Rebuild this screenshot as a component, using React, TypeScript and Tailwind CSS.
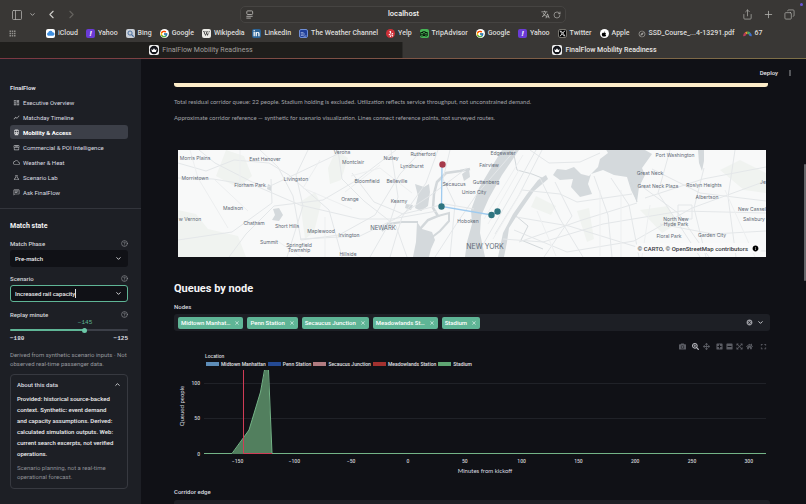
import React, { useState } from "react";
import { ChevronDown, ChevronLeft, ChevronRight, ChevronUp, CircleHelp, Copy, PanelLeft, Plus, RotateCw, Share } from "lucide-react";
import { FaArrowsAlt, FaCamera, FaExpandArrowsAlt, FaHome, FaMinusSquare, FaPlusSquare, FaSearchPlus, FaApple, FaLinkedinIn, FaWikipediaW, FaYelp, FaTripadvisor } from "react-icons/fa";
import { FaXTwitter } from "react-icons/fa6";
import { FcGoogle } from "react-icons/fc";
import { MdCloudQueue, MdDirectionsSubway, MdFullscreen, MdMoreVert, MdOutlineChat, MdOutlineDashboard, MdOutlineScience, MdOutlineStorefront, MdShowChart, MdTranslate, MdCancel, MdApps, MdOutlineExplore, MdInfo, MdClose } from "react-icons/md";

const box = "flex size-[9px] shrink-0 items-center justify-center overflow-hidden rounded-[2px]";

const Yahoo = () => <span className={`${box} bg-[#6a3bd6] text-[8px] font-bold italic text-white`}>!</span>;
const Google = () => (
  <span className="flex size-[9px] shrink-0 items-center justify-center rounded-full bg-white"><FcGoogle size={8} /></span>
);

const bookmarks: { name: string; icon: React.ReactNode }[] = [
  {
    name: "iCloud",
    icon: (
      <span className={`${box} bg-white`}>
        <svg viewBox="0 0 10 10" className="size-[9px]"><path d="M2.6 7.5a1.8 1.8 0 0 1-.1-3.5 2.6 2.6 0 0 1 4.900-.5A2 2 0 0 1 7.500 7.500z" fill="#3f8fe0" /></svg>
      </span>
    ),
  },
  { name: "Yahoo", icon: <Yahoo /> },
  {
    name: "Bing",
    icon: (
      <span className={`${box} bg-[#c9ced6]`}>
        <svg viewBox="0 0 10 10" className="size-[9px]" fill="none" stroke="#42699c"><circle cx="4.500" cy="4.500" r="2.300" /><path d="M6.200 6.200 8.500 8.500" strokeWidth="1.300" /></svg>
      </span>
    ),
  },
  { name: "Google", icon: <Google /> },
  { name: "Wikipedia", icon: <span className={`${box} bg-[#ecebe6] text-black`}><FaWikipediaW size={7} /></span> },
  { name: "LinkedIn", icon: <span className={`${box} bg-[#2d6496] text-white`}><FaLinkedinIn size={7} /></span> },
  {
    name: "The Weather Channel",
    icon: (
      <span className={`${box} border border-[#6f8ed6] bg-[#203f9a]`}>
        <svg viewBox="0 0 10 10" className="size-[8px]" fill="none" stroke="#c9d6f4" strokeWidth=".9"><path d="M1 3h4M1 5h6M1 7.500q2-1.500 4 0t4 0" /></svg>
      </span>
    ),
  },
  { name: "Yelp", icon: <span className="flex size-[9px] shrink-0 items-center justify-center rounded-full bg-[#cf3038] text-white"><FaYelp size={6} /></span> },
  { name: "TripAdvisor", icon: <span className={`${box} bg-[#46b455] text-black`}><FaTripadvisor size={8} /></span> },
  { name: "Google", icon: <Google /> },
  { name: "Yahoo", icon: <Yahoo /> },
  { name: "Twitter", icon: <span className={`${box} border border-[#77756f] bg-black text-white`}><FaXTwitter size={7} /></span> },
  { name: "Apple", icon: <span className="flex size-[9px] shrink-0 items-center justify-center rounded-full bg-white text-black"><FaApple size={6} /></span> },
  { name: "SSD_Course_...4-13291.pdf", icon: <MdOutlineExplore size={8} className="text-[#a9a8a5]" /> },
  {
    name: "67",
    icon: (
      <svg viewBox="0 0 10 10" className="size-[9px]" fill="none" strokeWidth="2.600">
        <path d="M1.500 8A3.500 3.500 0 0 1 3 4.800" stroke="#b93b5a" />
        <path d="M3 4.800A3.500 3.500 0 0 1 5 4.200" stroke="#e79a2e" />
        <path d="M5 4.200A3.500 3.500 0 0 1 7.400 5.200" stroke="#49a863" />
        <path d="M7.400 5.200A3.500 3.500 0 0 1 8.500 8" stroke="#3d6fd0" />
      </svg>
    ),
  },
];

const Favicon = () => (
  <svg viewBox="0 0 10 10" className="size-[10px] shrink-0">
    <rect width="10" height="10" rx="2" fill="#f2f2f2" />
    <circle cx="5" cy="5" r="4.200" fill="#14161c" />
    <path d="M2.200 4.200 3.800 5 5 3.300 6.200 5l1.600-.8L6.800 7H3.200z" fill="#fff" />
  </svg>
);

function Browser() {
  return (
    <div className="shrink-0 bg-[#393735] text-[#dedddb]">
      <div className="relative flex h-[27px] items-center px-[11px] pt-[2px] text-[#b5b4b1]">
        <div className="flex flex-1 items-center">
          <button aria-label="Sidebar"><PanelLeft size={12} strokeWidth={1.5} /></button>
          <button aria-label="Sidebar options" className="ml-[6px]"><ChevronDown size={7} strokeWidth={3} /></button>
          <button aria-label="Back" className="ml-[9px] text-[#cfcecb]"><ChevronLeft size={13} strokeWidth={2} /></button>
          <button aria-label="Forward" className="ml-[7px] text-[#64625f]"><ChevronRight size={13} strokeWidth={2} /></button>
        </div>
        <div className="flex h-[17px] w-[326px] max-w-1/2 items-center justify-between rounded-[5px] border border-[#464442] bg-[#363432] px-[4px]">
          <svg viewBox="0 0 10 10" className="size-[9px]" fill="none" stroke="currentColor"><rect x="2" y="1" width="6.500" height="4" rx="1" /><path d="M1.500 7h7M1.500 9h5" /></svg>
          <span className="pl-[12px] font-['Inter',sans-serif] text-[7px] font-semibold text-[#f1f0ee]">localhost</span>
          <span className="flex items-center gap-[3px]"><MdTranslate size={9} /><button aria-label="Reload"><RotateCw size={8} strokeWidth={2} /></button></span>
        </div>
        <div className="flex flex-1 items-center justify-end gap-[10px]">
          <button aria-label="Share"><Share size={11} strokeWidth={1.5} /></button>
          <button aria-label="New tab"><Plus size={11} strokeWidth={1.700} /></button>
          <button aria-label="Tab overview"><Copy size={11} strokeWidth={1.500} className="-scale-x-100" /></button>
        </div>
        <span className="absolute right-[3px] top-[3px] size-[3px] rounded-full bg-[#6a55d8]" />
      </div>
      <nav aria-label="Bookmarks" className="flex h-[15px] items-center whitespace-nowrap pb-[2px] pl-[8px] text-[7px] font-medium">
        <MdApps size={9} className="mr-[29px] shrink-0 text-[#918f8c]" />
        <div className="flex items-center gap-[8px]">
          {bookmarks.map((b, i) => (
            <a key={i} href="#" className="flex items-center gap-[3px]">{b.icon}{b.name}</a>
          ))}
        </div>
      </nav>
      <div className="grid h-[16px] grid-cols-2 text-[7px]">
        <button className="flex items-center justify-center gap-[3px] border-r border-r-[#2c2b29] bg-[#1f1e1c] text-[#a09f9c]"><Favicon />FinalFlow Mobility Readiness</button>
        <button className="flex items-center justify-center gap-[3px] font-medium text-[#e9e8e6]"><Favicon />FinalFlow Mobility Readiness</button>
      </div>
      <div className="h-px bg-linear-to-r from-[#7b3742] to-[#7d7048]" />
    </div>
  );
}

const pages = [
  { name: "Executive Overview", Icon: MdOutlineDashboard },
  { name: "Matchday Timeline", Icon: MdShowChart },
  { name: "Mobility & Access", Icon: MdDirectionsSubway },
  { name: "Commercial & POI Intelligence", Icon: MdOutlineStorefront },
  { name: "Weather & Heat", Icon: MdCloudQueue },
  { name: "Scenario Lab", Icon: MdOutlineScience },
  { name: "Ask FinalFlow", Icon: MdOutlineChat },
];

function FieldLabel({ id, children }: { id: string; children: string }) {
  return (
    <div className="flex h-[10px] items-center justify-between">
      <label htmlFor={id} className="text-[6px] font-medium text-[#d6d7da]">{children}</label>
      <CircleHelp size={7} strokeWidth={2} className="text-[#9a9ba1]" />
    </div>
  );
}

function Sidebar() {
  const [minute, setMinute] = useState(-145);
  const filled = ((minute + 180) / 55) * 100;
  return (
    <aside className="w-[141px] shrink-0 bg-[#1d1f25] text-[#dcdde0]">
      <nav className="border-b border-[#33353c] pb-[9px] pl-[10px] pr-[13px] pt-[24px]">
        <h2 className="mb-[2px] text-[6px] font-bold leading-[10px]">FinalFlow</h2>
        <ul className="flex flex-col gap-px">
          {pages.map(({ name, Icon }) => (
            <li key={name}>
              <a
                href="#"
                className={
                  name === "Mobility & Access"
                    ? "flex h-[14px] items-center gap-[3px] rounded-[3px] bg-[#3c3f48] pl-[3px] text-[6px] font-bold text-white"
                    : "flex h-[14px] items-center gap-[3px] pl-[3px] text-[6px] text-[#dcdde0]"
                }
              >
                <Icon size={7} className="shrink-0 opacity-80" />
                <span className="whitespace-nowrap">{name}</span>
              </a>
            </li>
          ))}
        </ul>
      </nav>
      <div className="pl-[10px] pr-[13px] pt-[12px]">
        <h3 className="mb-[6px] text-[7px] font-bold leading-[11px] text-[#f3f3f4]">Match state</h3>
        <FieldLabel id="phase">Match Phase</FieldLabel>
        <div className="relative mt-[2px]">
          <select id="phase" className="block h-[17px] w-full appearance-none rounded-[3px] bg-[#101116] px-[5px] text-[6px] font-medium text-[#ededef]"><option>Pre-match</option></select>
          <ChevronDown size={7} strokeWidth={3} className="pointer-events-none absolute right-[6px] top-[5px]" />
        </div>
        <div className="mt-[6px]"><FieldLabel id="scenario">Scenario</FieldLabel></div>
        <div className="mt-[2px] flex h-[17px] items-center rounded-[3px] border border-[#5fb596] bg-[#101116] pl-[4px] pr-[5px] text-[6px] font-medium text-[#ededef]">
          <input id="scenario" role="combobox" aria-expanded="false" defaultValue="Increased rail capacity" className="max-w-[90px] outline-none [field-sizing:content]" />
          <span className="h-[9px] w-px bg-[#e0e0e3]" />
          <ChevronDown size={7} strokeWidth={3} className="ml-auto" />
        </div>
        <div className="mt-[7px]"><FieldLabel id="minute">Replay minute</FieldLabel></div>
        <div className="relative h-[7px] font-['Liberation_Mono',monospace] text-[6px] leading-[7px] text-[#5fb596]">
          <span className="absolute -translate-x-1/2" style={{ left: `${filled}%` }}>−{Math.abs(minute)}</span>
        </div>
        <input
          id="minute"
          type="range"
          min={-180}
          max={-125}
          value={minute}
          onChange={(e) => setMinute(Number(e.target.value))}
          className="mt-[3px] block h-[2px] w-full appearance-none rounded-full [&::-webkit-slider-thumb]:size-[5px] [&::-webkit-slider-thumb]:appearance-none [&::-webkit-slider-thumb]:rounded-full [&::-webkit-slider-thumb]:bg-[#6cc9a8]"
          style={{ background: `linear-gradient(to right, #5fb596 ${filled}%, #3c3f48 ${filled}%)` }}
        />
        <div className="mt-[4px] flex justify-between font-['Liberation_Mono',monospace] text-[6px] font-bold leading-[8px]"><span>−180</span><span>−125</span></div>
        <p className="mt-[7px] whitespace-nowrap text-[6px] leading-[9px] text-[#96979d]">Derived from synthetic scenario inputs · Not<br />observed real-time passenger data.</p>
        <section className="mt-[6px] rounded-[4px] border border-[#373940] px-[6px] pb-[7px]">
          <button className="flex h-[18px] w-full items-center justify-between text-[6px] font-medium"><span>About this data</span><ChevronUp size={7} strokeWidth={3} /></button>
          <p className="whitespace-nowrap text-[6px] font-medium leading-[11px] text-[#ededef]">
            Provided: historical source-backed<br />context. Synthetic: event demand<br />and capacity assumptions. Derived:<br />calculated simulation outputs. Web:<br />current search excerpts, not verified<br />operations.
          </p>
          <p className="mt-[4px] text-[6px] leading-[9px] text-[#8e8f95]">Scenario planning, not a real-time operational forecast.</p>
        </section>
      </div>
    </aside>
  );
}

const places: [string, number, number][] = [
  ["Morris Plains", 195, 160], ["Morristown", 195, 180], ["East Hanover", 265, 161], ["Florham Park", 250, 187],
  ["Madison", 233, 210], ["Chatham", 254, 225], ["Livingston", 296, 181], ["Short Hills", 287, 228], ["Summit", 269, 244],
  ["Springfield", 299, 247], ["Township", 299, 252], ["Maplewood", 321, 233], ["Irvington", 349, 237], ["Orange", 350, 201],
  ["Montclair", 353, 164], ["Verona", 342, 154], ["Nutley", 391, 160], ["Bloomfield", 367, 183], ["Belleville", 397, 183],
  ["Lyndhurst", 412, 168], ["Rutherford", 423, 156], ["Kearny", 399, 203], ["Hillside", 348, 256],
  ["Secaucus", 454, 186], ["Union City", 474, 194], ["Hoboken", 468, 223], ["Guttenberg", 486, 184], ["Fairview", 489, 167],
  ["Edgewater", 503, 155], ["Port Washington", 675, 157], ["Great Neck", 650, 175], ["Great Neck Plaza", 658, 188],
  ["Roslyn Heights", 704, 187], ["Albertson", 707, 199], ["North New", 676, 221], ["Hyde Park", 676, 226],
  ["Floral Park", 669, 238], ["Garden City", 712, 237], ["New Cassel", 752, 211], ["Salisbury", 754, 221],
  ["w Vernon", 190, 221], ["Je", 763, 184],
];

function CorridorMap() {
  return (
    <div className="relative mx-[4px] bg-[#f8f9f9]">
      <svg viewBox="178 150 588 107" className="block w-full" role="img" aria-label="Corridor map">
        <g fill="#f0f3f0">
          <path d="M178 210l18 4 12 15 30 7 8 21h-68zM226 150l18 6 8 20-14 12-22-12zM336 150l12 8-7 22-11 4-2-16zM300 202l15-10 6 12-7 28-9 7zM640 210l28-4 9 18-15 9zM720 170l20-10 26 13v20l-22-3zM577 211l12-3 5 31-7 3zM536 196l20 10-5 9-20-8z" />
        </g>
        <g fill="#d4d9dc">
          <path d="M502 150h17l-17 25-13 23-8 18-1 17 5 24h-20l2-15 5-18-1-14 8-22 12-20z" />
          <path d="M602 150h43l7 4-10 14 3 7-6 12-2 15-6-12-4-13-13-2-11-5-12 4-3 10 4 10-12 3-9-10 2-8-13 1-7-5 4-6 9 1 8-3 7 7 8 2 9-9 2-8 8-6-4-7z" />
          <path d="M538 180l8-5 2 4-14 12-18 26-7 11-2 14-3 15h-6l5-24 10-19 14-20z" />
          <path d="M415 184l9 3 5-3 1 8-2 14-7 5-6-3 3-12zM406 204l7 1-2 5-6-2zM417 222l5 7 10 3 3 8-4 9-2 8h-16l3-15z" />
          <path d="M698 150h6v11l-2 10-3-8zM268 184l4 2-1 5-4-2zM273 209l6-1 4 7-4 6-7-1 3-5zM462 174l7-5 1 8-6 4z" />
        </g>
        <g fill="none" stroke="#d3d8db">
          <path d="M470 169l-10 2-14 2-9 9-3 12-1 14 5 8-10 4-8 9" strokeWidth="2.500" />
          <path d="M418 222h-16l-14 2-6 7M438 216l11-3v8l-9 10-9 7" strokeWidth="2" />
          <path d="M513 150l4 20 15 4 10 4M516 216l12 10-7 14 22 9M637 202l-6-20" strokeWidth="1" />
        </g>
        <g fill="none" stroke="#e4e7e9" strokeWidth="1">
          <path d="M178 178l35 1 43 7 44 19 60 14h32l45-8M178 163l28 8 28-11 35 3 20 12 40 35 13 47M199 150l16 13 37 19 16 5 30-14 48-23M229 257l17-23 28-28 49-6 34-20 39-30" />
          <path d="M260 150l18 17 15 29 8 44 38-5 36-20 25-41 22-24M308 150l-12 25 7 31-16 51M178 240l54-8 40-29-1-24M338 150l4 29 22 22 32 25 11 31" />
          <path d="M390 257l12-40 24-34 12-33M370 257l20-35 8-25-7-47M352 173l22 29 29 12 42-10 29 5M300 239l60-3 35-17 36-24 36-27" />
          <path d="M450 150l-7 29 12 25-5 53M435 257l22-34 20-29 38-44M495 234l24-39 23-45M480 250l33-58 23-42M503 239l40 3 60-18 78-13 85 2" />
          <path d="M516 217l53 9 71 22 126 3M514 230l53 22 67-11 58-33 74-27M540 178l20 41 23 38M555 182l17 34-28 41M594 176l14 39 4 42M611 178l18 27 10 52M640 185l38 28 31 44M637 203l-55 17-63 22M652 169l48 24 66 8" />
          <path d="M670 150l-12 43 20 30 22 34M704 168l-10 40 12 49M735 150l-7 47 8 60M645 198l58-19 63-12M660 224l53 10 53-3M530 150l19 13 31-1 20-9M522 190l38 4 17 8 55-8M678 205v14h14v-14z" />
        </g>
        <g fill="none" stroke="#edeff0" strokeWidth="1">
          <path d="M488 224l31-54M484 219l39-64M493 239l30-50M600 190v66M621 190v67M650 205l-8 52M725 190l30 67M537 211l19 45M190 150l8 28 30 50M215 180l33 31M240 150v36M320 160l-17 28 49 21M380 165l-35 27M412 193l-32-25-29 8M325 217v40M276 240l25 17" />
        </g>
        <path d="M442 164l-.5 42.500 50 8.500 6-3" fill="none" stroke="#9fcbef" strokeWidth="1.300" />
        <circle cx="442.500" cy="164.500" r="3.200" fill="#a63a4b" />
        <g fill="#2f7580"><circle cx="441.500" cy="206.500" r="3.200" /><circle cx="491.500" cy="215" r="3.200" /><circle cx="497.500" cy="211.500" r="3.200" /></g>
        <g fill="#5f6975" fontSize="5" textAnchor="middle" className="font-['Inter',sans-serif]">
          {places.map(([name, x, y]) => <text key={name} x={x} y={y}>{name}</text>)}
        </g>
        <g fill="#626c78" textAnchor="middle" className="font-['Inter',sans-serif]">
          <text x="383" y="230" fontSize="6">NEWARK</text>
          <text x="485" y="249" fontSize="7">NEW YORK</text>
        </g>
      </svg>
      <div className="absolute bottom-[4px] right-[4px] flex h-[10px] items-center gap-[4px] rounded-full bg-[#fafafa] px-[3px] text-[6px] font-medium text-[#33363b]">
        <span>© <a href="#">CARTO</a>, © <a href="#">OpenStreetMap</a> contributors</span>
        <MdInfo size={7} className="text-black" />
      </div>
    </div>
  );
}

const series = [
  { name: "Midtown Manhattan", color: "bg-[#5d8db8]" },
  { name: "Penn Station", color: "bg-[#244a94]" },
  { name: "Secaucus Junction", color: "bg-[#b07b80]" },
  { name: "Meadowlands Station", color: "bg-[#a3312f]" },
  { name: "Stadium", color: "bg-[#5fa673]" },
];

const xOf = (minute: number) => 234 + minute * 1.136;

function QueueChart() {
  return (
    <figure className="pt-px">
      <figcaption className="pl-[31px] text-[5px] font-medium leading-[8px] text-[#d4d5d8]">Location</figcaption>
      <ul className="flex gap-[2px] pl-[32px] text-[5px] font-medium leading-[8px] text-[#e3e4e7]">
        {series.map((s) => (
          <li key={s.name} className="flex items-center gap-[2px] whitespace-nowrap"><span className={`h-[4px] w-[13px] ${s.color}`} />{s.name}</li>
        ))}
      </ul>
      <svg viewBox="0 0 596 108" className="block w-full" role="img" aria-label="Queued people by minutes from kickoff">
        <path d="M30 15.500h562M30 50.500h562" stroke="#202228" />
        <path d="M58 86 75 62 86.500 24 91 2h3L98 86z" fill="#527f5e" />
        <path d="M30 85.500h28L75 62 86.500 24 90.500 2M94.500 2 98 85.500h494" fill="none" stroke="#74b487" />
        <path d="M69.500 2v83.500H98" fill="none" stroke="#d03c56" />
        <g fill="#d4d5d8" fontSize="5" textAnchor="end" className="font-['Roboto',sans-serif] font-medium">
          <text x="26" y="17">100</text><text x="26" y="52">50</text><text x="26" y="88">0</text>
        </g>
        <g fill="#d4d5d8" fontSize="5" textAnchor="middle" className="font-['Roboto',sans-serif] font-medium">
          {[-150, -100, -50, 0, 50, 100, 150, 200, 250, 300].map((m) => (
            <text key={m} x={xOf(m)} y="95">{m < 0 ? `−${-m}` : m}</text>
          ))}
        </g>
        <g fill="#dcdde0" fontSize="6" textAnchor="middle" className="font-['Lato',sans-serif]">
          <text x="311" y="105">Minutes from kickoff</text>
          <text transform="translate(10 38) rotate(-90)">Queued people</text>
        </g>
      </svg>
    </figure>
  );
}

const nodes = ["Midtown Manhat…", "Penn Station", "Secaucus Junction", "Meadowlands St…", "Stadium"];

function ModeBar() {
  return (
    <div className="flex h-[10px] items-center justify-end gap-[6px] pr-[2px] text-[#5b5d64]">
      <button aria-label="Download plot"><FaCamera size={7} /></button>
      <span className="flex gap-[4px]">
        <button aria-label="Zoom" className="text-[#b9bac0]"><FaSearchPlus size={7} /></button>
        <button aria-label="Pan"><FaArrowsAlt size={7} /></button>
      </span>
      <span className="flex gap-[3px]">
        <button aria-label="Zoom in"><FaPlusSquare size={7} /></button>
        <button aria-label="Zoom out"><FaMinusSquare size={7} /></button>
        <button aria-label="Autoscale"><FaExpandArrowsAlt size={7} /></button>
        <button aria-label="Reset axes"><FaHome size={7} /></button>
      </span>
      <button aria-label="Fullscreen"><MdFullscreen size={9} /></button>
    </div>
  );
}

function Main() {
  return (
    <main className="relative min-w-0 flex-1 overflow-hidden bg-[#101116] text-[#dcdde0]">
      <header className="flex h-[24px] items-center justify-end gap-[8px] pr-[12px] pt-[3px] text-[6px] font-medium">
        <button className="text-[#e3e3e6]">Deploy</button>
        <button aria-label="Menu"><MdMoreVert size={8} /></button>
      </header>
      <div className="pl-[33px] pr-[36px]">
        <div className="mr-[2px] h-[4px] rounded-b-[3px] bg-[#fdedc9]" />
        <p className="mt-[10px] font-['Lato',sans-serif] text-[6px] leading-[9px] text-[#a3a4a9]">Total residual corridor queue: 22 people. Stadium holding is excluded. Utilization reflects service throughput, not unconstrained demand.</p>
        <p className="mb-[28px] mt-[7px] font-['Lato',sans-serif] text-[6px] leading-[9px] text-[#a3a4a9]">Approximate corridor reference — synthetic for scenario visualization. Lines connect reference points, not surveyed routes.</p>
        <CorridorMap />
        <h2 className="mt-[24px] text-[11px] font-bold leading-[16px] text-[#f5f5f6]">Queues by node</h2>
        <h3 id="nodes" className="mt-[5px] text-[6px] font-medium leading-[10px]">Nodes</h3>
        <div role="group" aria-labelledby="nodes" className="mt-[2px] flex h-[17px] items-center gap-[4px] rounded-[3px] bg-[#1d1f25] px-[4px]">
          {nodes.map((n) => (
            <span key={n} className="flex h-[12px] items-center gap-[4px] whitespace-nowrap rounded-[2px] bg-[#5fb596] px-[3px] text-[6px] font-medium text-white">
              {n}
              <button aria-label={`Remove ${n}`}><MdClose size={6} /></button>
            </span>
          ))}
          <button aria-label="Clear all" className="ml-auto text-[#9a9ba1]"><MdCancel size={7} /></button>
          <button aria-label="Open" className="mr-[2px]"><ChevronDown size={7} strokeWidth={3} /></button>
        </div>
        <div className="mt-[10px]"><ModeBar /></div>
        <QueueChart />
        <label htmlFor="edge" className="mt-[11px] block text-[6px] font-medium leading-[10px]">Corridor edge</label>
        <select id="edge" className="mt-[3px] block h-[17px] w-full appearance-none rounded-[3px] bg-[#1d1f25] px-[5px] text-[6px]"><option></option></select>
      </div>
      <span className="absolute right-0 top-[105px] h-[117px] w-[2px] rounded-full bg-[#65666a]" />
    </main>
  );
}

export default function App() {
  return (
    <div className="flex h-screen flex-col overflow-hidden font-['Roboto','Liberation_Sans',sans-serif]">
      <Browser />
      <div className="flex min-h-0 flex-1">
        <Sidebar />
        <Main />
      </div>
    </div>
  );
}
